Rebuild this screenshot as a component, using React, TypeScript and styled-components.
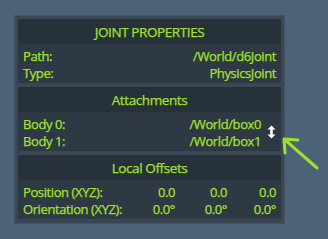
import React from 'react';
import styled, { createGlobalStyle } from 'styled-components';

const GlobalStyle = createGlobalStyle`
  html, body {
    margin: 0;
    padding: 0;
    background: #4c6277;
  }
  body {
    font-family: 'Open Sans', 'Noto Sans', 'DejaVu Sans', sans-serif;
  }
`;

const Page = styled.div`
  position: relative;
  width: 328px;
  height: 239px;
  padding: 15px 0 0 14px;
  box-sizing: border-box;
`;

const Panel = styled.div`
  width: 271px;
  height: 209px;
  box-sizing: border-box;
  background: #3a4856;
  border: 1px solid #435365;
  padding: 3px;
  display: flex;
  flex-direction: column;
  gap: 4px;
`;

const Section = styled.div`
  background: #2e3943;
  display: flex;
  flex-direction: column;
`;

const Header = styled.div`
  height: 25px;
  background: #27313a;
  color: #a2e22c;
  font-size: 13.5px;
  letter-spacing: -0.4px;
  -webkit-text-stroke: 0.25px #a2e22c;
  display: flex;
  align-items: center;
  justify-content: center;
`;

const Body = styled.div`
  display: flex;
  align-items: center;
  padding: 3px 5px 2px 5px;
`;

const Rows = styled.div`
  flex: 1;
  display: flex;
  flex-direction: column;
`;

const Row = styled.div`
  display: flex;
  align-items: center;
  height: 17px;
  color: #a2e22c;
  font-size: 13px;
  letter-spacing: -0.4px;
  -webkit-text-stroke: 0.25px #a2e22c;
`;

const Label = styled.span`
  flex: 1;
  white-space: nowrap;
`;

const Value = styled.span<{ $w?: number }>`
  text-align: right;
  white-space: nowrap;
  width: ${({ $w }) => ($w ? `${$w}px` : 'auto')};
`;

const SwapButton = styled.div`
  width: 10px;
  margin-left: 5px;
  display: flex;
  align-items: center;
  justify-content: center;
`;

const Pointer = styled.svg`
  position: absolute;
  left: 280px;
  top: 136px;
`;

const SwapIcon = () => (
  <svg width="9" height="14" viewBox="0 0 9 14">
    <path d="M4.5 0.5 L8.5 4.5 H5.8 V9.5 H8.5 L4.5 13.5 L0.5 9.5 H3.2 V4.5 H0.5 Z" fill="#ffffff" />
  </svg>
);

export default function App() {
  return (
    <>
      <GlobalStyle />
      <Page>
        <Panel>
          <Section>
            <Header>JOINT PROPERTIES</Header>
            <Body>
              <Rows>
                <Row>
                  <Label>Path:</Label>
                  <Value>/World/d6Joint</Value>
                </Row>
                <Row>
                  <Label>Type:</Label>
                  <Value>PhysicsJoint</Value>
                </Row>
              </Rows>
            </Body>
          </Section>
          <Section>
            <Header>Attachments</Header>
            <Body>
              <Rows>
                <Row>
                  <Label>Body 0:</Label>
                  <Value>/World/box0</Value>
                </Row>
                <Row>
                  <Label>Body 1:</Label>
                  <Value>/World/box1</Value>
                </Row>
              </Rows>
              <SwapButton>
                <SwapIcon />
              </SwapButton>
            </Body>
          </Section>
          <Section>
            <Header>Local Offsets</Header>
            <Body>
              <Rows>
                <Row>
                  <Label>Position (XYZ):</Label>
                  <Value $w={50}>0.0</Value>
                  <Value $w={52}>0.0</Value>
                  <Value $w={49}>0.0</Value>
                </Row>
                <Row>
                  <Label>Orientation (XYZ):</Label>
                  <Value $w={50}>0.0°</Value>
                  <Value $w={52}>0.0°</Value>
                  <Value $w={49}>0.0°</Value>
                </Row>
              </Rows>
            </Body>
          </Section>
        </Panel>
        <Pointer width="42" height="36" viewBox="0 0 42 36">
          <path
            d="M4 3 L37 32 M4 3 L18 4 M4 3 L5 17"
            stroke="#9be22f"
            strokeWidth="3"
            strokeLinecap="round"
            strokeLinejoin="round"
            fill="none"
          />
        </Pointer>
      </Page>
    </>
  );
}
